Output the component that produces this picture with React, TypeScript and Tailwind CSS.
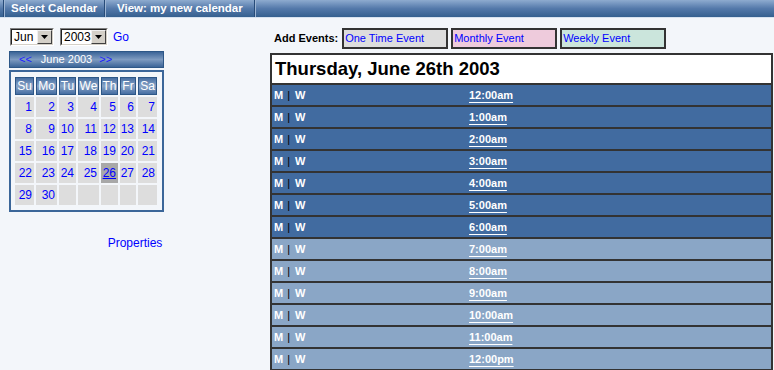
const FONT = "font-['Liberation_Sans',Arial,sans-serif]"

const weeks: (number | null)[][] = [
  [1, 2, 3, 4, 5, 6, 7],
  [8, 9, 10, 11, 12, 13, 14],
  [15, 16, 17, 18, 19, 20, 21],
  [22, 23, 24, 25, 26, 27, 28],
  [29, 30, null, null, null, null, null],
]

const dayNames = ['Su', 'Mo', 'Tu', 'We', 'Th', 'Fr', 'Sa']

const hours = [
  '12:00am', '1:00am', '2:00am', '3:00am', '4:00am', '5:00am', '6:00am',
  '7:00am', '8:00am', '9:00am', '10:00am', '11:00am', '12:00pm',
]

function Separator() {
  return (
    <div className="flex h-[17px]">
      <div className="w-px bg-[#274b78]" />
      <div className="w-px bg-[#9db5d3]" />
    </div>
  )
}

function FakeSelect({ value, width }: { value: string; width: string }) {
  return (
    <div className={`flex h-[18px] ${width} border border-t-[#808080] border-l-[#808080] border-b-white border-r-white`}>
      <div className="flex flex-1 border border-t-[#222] border-l-[#222] border-b-[#d4d0c8] border-r-[#d4d0c8] bg-white">
        <span className="flex-1 pl-[2px] text-[12px] leading-[14px] text-black">{value}</span>
        <div className="flex w-[15px] items-center justify-center border border-t-[#f0f0f0] border-l-[#f0f0f0] border-b-[#404040] border-r-[#404040] bg-[#d4d0c8]">
          <svg width="7" height="4" viewBox="0 0 7 4">
            <path d="M0 0h7L3.5 4z" fill="#000" />
          </svg>
        </div>
      </div>
    </div>
  )
}

function MiniCalendar() {
  return (
    <div className="flex flex-col">
      <div className="flex h-[17px] w-[155px] items-center border border-[#2d5787] bg-gradient-to-b from-[#3c6598] via-[#7e9bc0] to-[#3c6598] pl-[9px] text-[11px]">
        <span className="text-[#1c1cff]">&lt;&lt;</span>
        <span className="ml-[9px] text-white">June 2003</span>
        <span className="ml-[7px] text-[#1c1cff]">&gt;&gt;</span>
      </div>
      <div className="mt-[2px] w-[155px] border-2 border-[#3b6699] px-[4px] pt-[5px] pb-[5px]">
        <div className="grid grid-cols-[19px_21px_17px_21px_17px_16px_19px] gap-[2px]">
          {dayNames.map((d) => (
            <div
              key={d}
              className="flex h-[18px] items-center justify-center border border-[#2d5787] bg-gradient-to-b from-[#466ea2] via-[#8aa5c7] to-[#466ea2] text-[12px] text-white"
            >
              {d}
            </div>
          ))}
          {weeks.flat().map((n, i) => (
            <div
              key={i}
              className={`flex h-[20px] items-center justify-end pr-[2px] text-[12px] text-[#0000ff] ${n === 26 ? 'bg-[#a8a8a8] underline' : 'bg-[#dddddd]'}`}
            >
              {n}
            </div>
          ))}
        </div>
      </div>
    </div>
  )
}

function EventButton({ label, bg }: { label: string; bg: string }) {
  return (
    <div className={`flex h-[21px] w-[106px] items-center border-2 border-[#333] ${bg} pl-[1px] text-[11px] text-[#0000ff]`}>
      {label}
    </div>
  )
}

export default function App() {
  return (
    <div className={`h-[370px] w-[774px] overflow-hidden bg-[#f3f6fa] ${FONT}`}>
      {/* Top Menu */}
      <div className="flex h-[17px] items-center bg-gradient-to-b from-[#8eabcf] via-[#5479aa] to-[#35608f] text-[11.5px] font-bold text-white">
        <div className="w-[3px]" />
        <Separator />
        <span className="ml-[6px] w-[93px]">Select Calendar</span>
        <Separator />
        <span className="ml-[11px] w-[137px]">View: my new calendar</span>
        <Separator />
      </div>
      <div className="h-px bg-[#d7e2ef]" />

      <div className="flex">
        {/* Left column */}
        <div className="flex w-[270px] flex-col pl-[9px] pt-[10px]">
          <div className="flex items-center pl-px">
            <FakeSelect value="Jun" width="w-[44px]" />
            <div className="w-[6px]" />
            <FakeSelect value="2003" width="w-[48px]" />
            <span className="ml-[5px] text-[12px] text-[#0000ff]">Go</span>
          </div>
          <div className="mt-[5px]">
            <MiniCalendar />
          </div>
          <div className="mt-[22px] pr-[9px] text-center text-[12px] text-[#0000ff]">Properties</div>
        </div>

        {/* Right column */}
        <div className="flex w-[503px] flex-col pt-[10px]">
          <div className="flex items-center">
            <span className="ml-[4px] mr-[4px] text-[11px] font-bold text-black">Add Events:</span>
            <EventButton label="One Time Event" bg="bg-[#dddddd]" />
            <div className="w-[3px]" />
            <EventButton label="Monthly Event" bg="bg-[#eecbdc]" />
            <div className="w-[3px]" />
            <EventButton label="Weekly Event" bg="bg-[#cbe5dc]" />
          </div>

          <div className="mt-[4px] border-2 border-[#333]">
            <div className="flex h-[28px] items-center bg-white pl-[3px] text-[18.5px] font-bold text-black">
              Thursday, June 26th 2003
            </div>
            {hours.map((h, i) => (
              <div
                key={h}
                className={`flex h-[22px] items-center border-t-2 border-[#333] text-[11px] font-bold text-white ${i < 7 ? 'bg-[#416ba0]' : 'bg-[#8aa6c6]'}`}
              >
                <div className="flex w-[197px] items-center pl-[2px]">
                  <span>M</span>
                  <span className="ml-[4px] font-normal text-black">|</span>
                  <span className="ml-[5px]">W</span>
                </div>
                <span className="underline underline-offset-[3px]">{h}</span>
              </div>
            ))}
          </div>
        </div>
      </div>
    </div>
  )
}
